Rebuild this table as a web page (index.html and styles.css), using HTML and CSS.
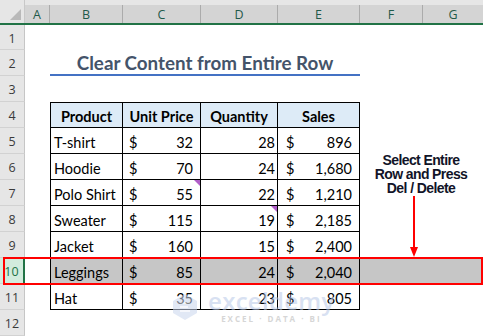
FILE: index.html
```html
<!DOCTYPE html>
<html>
<head>
<meta charset="utf-8">
<link rel="stylesheet" href="styles.css">
</head>
<body>
<div class="sheet">
  <div class="row hdr">
    <div class="corner"><span class="tri"></span></div>
    <div class="ch">A</div><div class="ch">B</div><div class="ch">C</div><div class="ch">D</div><div class="ch">E</div><div class="ch">F</div><div class="ch last">G</div>
  </div>
  <div class="row r1"><div class="rh">1</div></div>
  <div class="row"><div class="rh">2</div><div></div><div class="title">Clear Content from Entire Row</div></div>
  <div class="row"><div class="rh">3</div></div>
  <div class="row"><div class="rh">4</div><div></div>
    <div class="c th tl">Product</div><div class="c th">Unit Price</div><div class="c th">Quantity</div><div class="c th">Sales</div>
  </div>
  <div class="row"><div class="rh">5</div><div></div>
    <div class="c l">T-shirt</div><div class="c acc"><span>$</span><span>32</span></div><div class="c num">28</div><div class="c acc e"><span>$</span><span>896</span></div>
  </div>
  <div class="row"><div class="rh">6</div><div></div>
    <div class="c l">Hoodie</div><div class="c acc"><span>$</span><span>70</span></div><div class="c num">24</div><div class="c acc e"><span>$</span><span>1,680</span></div>
  </div>
  <div class="row"><div class="rh">7</div><div></div>
    <div class="c l">Polo Shirt</div><div class="c acc"><span>$</span><span>55</span><i class="cm"></i></div><div class="c num">22</div><div class="c acc e"><span>$</span><span>1,210</span></div>
  </div>
  <div class="row"><div class="rh">8</div><div></div>
    <div class="c l">Sweater</div><div class="c acc"><span>$</span><span>115</span></div><div class="c num">19<i class="cm"></i></div><div class="c acc e"><span>$</span><span>2,185</span></div>
  </div>
  <div class="row"><div class="rh">9</div><div></div>
    <div class="c l">Jacket</div><div class="c acc"><span>$</span><span>160</span></div><div class="c num">15</div><div class="c acc e"><span>$</span><span>2,400</span></div>
  </div>
  <div class="row sel"><div class="rh on">10</div><div class="a"></div>
    <div class="c l">Leggings</div><div class="c acc"><span>$</span><span>85</span></div><div class="c num">24</div><div class="c acc e"><span>$</span><span>2,040</span></div><div class="g"></div><div class="g"></div>
  </div>
  <div class="row"><div class="rh">11</div><div></div>
    <div class="c l">Hat</div><div class="c acc"><span>$</span><span>35</span></div><div class="c num">23</div><div class="c acc e"><span>$</span><span>805</span></div>
  </div>
  <div class="row"><div class="rh">12</div></div>

  <div class="note">Select Entire<br>Row and Press<br>Del / Delete</div>
  <div class="arrow"><span class="shaft"></span><span class="head"></span></div>
  <div class="selbox"></div>
  <div class="wm">
    <svg class="wm-icon" width="30" height="30" viewBox="0 0 30 30">
      <path d="M15 2 L27 9 L27 21 L15 28 L3 21 L3 9 Z" fill="#c9d6ee"/>
      <path d="M10 11 H20 M10 15 H18 M10 19 H20" stroke="#eef2fa" stroke-width="2.2" fill="none"/>
    </svg>
    <div class="wm-text">
      <div class="wm-name">exceldemy</div>
      <div class="wm-sub">EXCEL · DATA · BI</div>
    </div>
  </div>
</div>
</body>
</html>
```

FILE: styles.css
```css
* { box-sizing: border-box; }
html, body { margin: 0; padding: 0; background: #fff; }
body { width: 483px; height: 336px; overflow: hidden; font-family: Lato, "Open Sans", sans-serif; }

.sheet { position: relative; width: 483px; height: 336px; overflow: hidden; }

.row {
  display: grid;
  grid-template-columns: 25px 25px 73px 78px 77px 82px 63px 60px;
  height: 26px;
}
.row.r1 { height: 25px; }

.hdr {
  height: 25px;
  background: #e6e6e6;
  border-bottom: 2px solid #217346;
}
.corner { position: relative; background: #e6e6e6; border-right: 1px solid #c8c8c8; }
.tri {
  position: absolute; right: 3px; bottom: 3px;
  width: 0; height: 0;
  border-left: 11px solid transparent;
  border-bottom: 11px solid #b9b9b9;
}
.ch {
  margin-top: 5px;
  background: #d4d4d4;
  border-right: 1px solid #ababab;
  font-family: "Open Sans", "Noto Sans", sans-serif;
  font-size: 12.5px;
  color: #1f5a4a;
  display: flex; align-items: center; justify-content: center;
}
.ch.last { border-right: none; }

.rh {
  background: #e6e6e6;
  border-right: 1px solid #c6c6c6;
  border-bottom: 1px solid #d2d2d2;
  font-family: "Open Sans", "Noto Sans", sans-serif;
  font-size: 12.5px;
  color: #3a3a3a;
  display: flex; align-items: center; justify-content: center;
  padding-top: 2px;
}
.rh.on {
  background: #d2ecdd;
  color: #217346;
  border-right: 2px solid #217346;
}

.title {
  grid-column: 3 / 7;
  border-bottom: 2px solid #4472c4;
  color: #44546a;
  font-weight: 700;
  font-size: 18.8px;
  display: flex; align-items: center; justify-content: center;
  padding-top: 1px;
}

.c {
  position: relative;
  border-right: 1px solid #000;
  border-bottom: 1px solid #000;
  font-size: 14.5px;
  color: #000;
  display: flex; align-items: center;
  padding-top: 3px;
}
.c.l { border-left: 1px solid #000; padding-left: 3px; }
.th {
  background: #ddebf7;
  border-top: 1px solid #000;
  font-weight: 700;
  justify-content: center;
}
.th.tl { border-left: 1px solid #000; }
.acc { justify-content: space-between; padding-left: 6px; padding-right: 7px; }
.acc.e { padding-left: 8px; }
.num { justify-content: flex-end; padding-right: 2px; }

.cm {
  position: absolute; right: 0; top: 0;
  width: 0; height: 0;
  border-left: 6px solid transparent;
  border-top: 6px solid #b15fc9;
}

.sel .c, .sel .g { background: #c6c6c6; }

.note {
  position: absolute;
  left: 361px; top: 153px;
  width: 120px;
  text-align: center;
  font-family: "Liberation Sans", Arial, sans-serif;
  font-weight: 700;
  font-size: 14px;
  letter-spacing: -0.6px;
  line-height: 14px;
  color: #111428;
}

.arrow { position: absolute; left: 410px; top: 196px; width: 8px; height: 61px; }
.shaft { position: absolute; left: 3px; top: 0; width: 1.5px; height: 53px; background: #ff0000; }
.head {
  position: absolute; left: 0; bottom: 0;
  width: 0; height: 0;
  border-left: 4px solid transparent;
  border-right: 4px solid transparent;
  border-top: 10px solid #ff0000;
}

.selbox {
  position: absolute;
  left: 3px; top: 257px;
  width: 480px; height: 28px;
  border: 2px solid #ff0000;
}

.wm {
  position: absolute;
  left: 170px; top: 290px;
  display: flex; align-items: center; gap: 8px;
  opacity: 0.55;
}
.wm-text { display: flex; flex-direction: column; align-items: center; }
.wm-name {
  font-family: "Open Sans", sans-serif;
  font-size: 24px;
  font-weight: 600;
  color: #b9c9e8;
  line-height: 22px;
  letter-spacing: 0.3px;
}
.wm-sub {
  font-family: "Open Sans", sans-serif;
  font-size: 8px;
  font-weight: 700;
  letter-spacing: 2px;
  color: #b5b5b5;
  line-height: 10px;
  margin-top: 2px;
}
```
